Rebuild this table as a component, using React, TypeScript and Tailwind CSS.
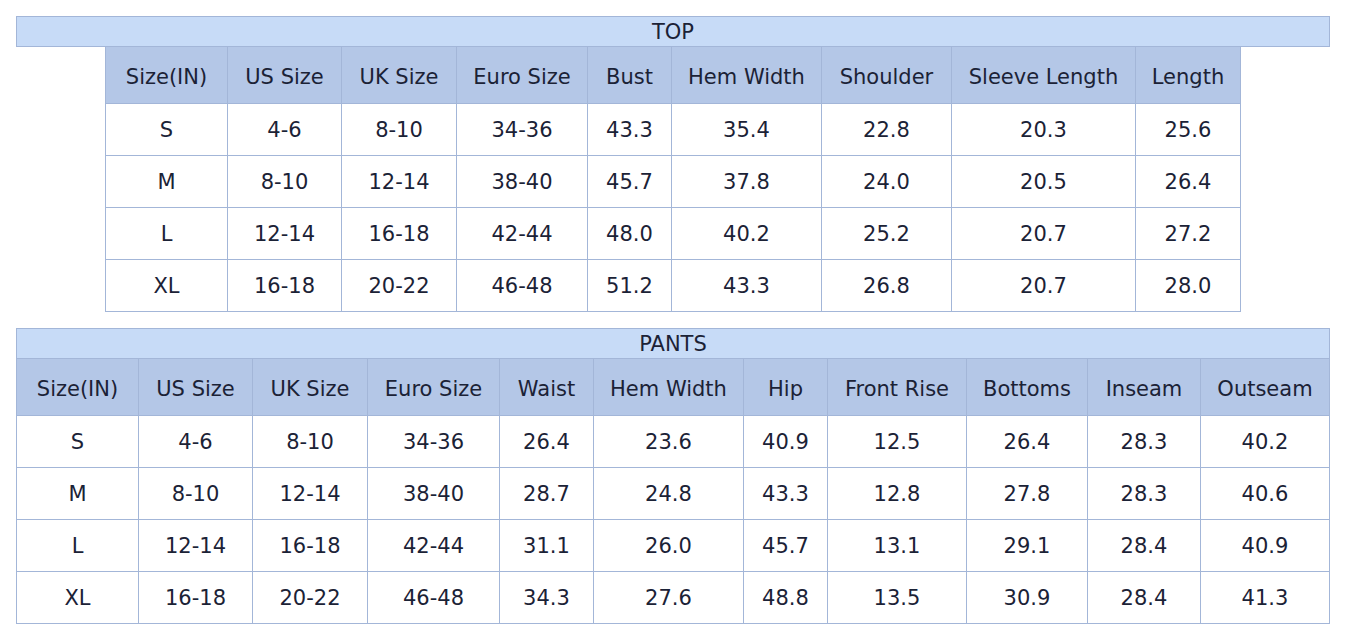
const TOP_HEAD = ["Size(IN)", "US Size", "UK Size", "Euro Size", "Bust", "Hem Width", "Shoulder", "Sleeve Length", "Length"];
const TOP_ROWS = [
  ["S", "4-6", "8-10", "34-36", "43.3", "35.4", "22.8", "20.3", "25.6"],
  ["M", "8-10", "12-14", "38-40", "45.7", "37.8", "24.0", "20.5", "26.4"],
  ["L", "12-14", "16-18", "42-44", "48.0", "40.2", "25.2", "20.7", "27.2"],
  ["XL", "16-18", "20-22", "46-48", "51.2", "43.3", "26.8", "20.7", "28.0"],
];

const PANTS_HEAD = ["Size(IN)", "US Size", "UK Size", "Euro Size", "Waist", "Hem Width", "Hip", "Front Rise", "Bottoms", "Inseam", "Outseam"];
const PANTS_ROWS = [
  ["S", "4-6", "8-10", "34-36", "26.4", "23.6", "40.9", "12.5", "26.4", "28.3", "40.2"],
  ["M", "8-10", "12-14", "38-40", "28.7", "24.8", "43.3", "12.8", "27.8", "28.3", "40.6"],
  ["L", "12-14", "16-18", "42-44", "31.1", "26.0", "45.7", "13.1", "29.1", "28.4", "40.9"],
  ["XL", "16-18", "20-22", "46-48", "34.3", "27.6", "48.8", "13.5", "30.9", "28.4", "41.3"],
];

function SizeTable({ head, rows, cols, width }: {
  head: string[];
  rows: string[][];
  cols: string;
  width: string;
}) {
  return (
    <div className={`${width} mx-auto border-l border-[#a3b6d8]`}>
      <div className={`grid ${cols} bg-[#b4c7e7]`}>
        {head.map((h) => (
          <div key={h} className="h-[57px] flex items-center justify-center border-r border-b border-[#a3b6d8] pt-1">
            {h}
          </div>
        ))}
      </div>
      {rows.map((row, r) => (
        <div key={r} className={`grid ${cols} bg-white`}>
          {row.map((c, i) => (
            <div key={i} className="h-[52px] flex items-center justify-center border-r border-b border-[#a3b6d8] pt-0.5">
              {c}
            </div>
          ))}
        </div>
      ))}
    </div>
  );
}

function TitleBar({ label }: { label: string }) {
  return (
    <div className="h-[31px] flex items-center justify-center bg-[#c7dbf7] border border-[#a3b6d8] pt-0.5">
      {label}
    </div>
  );
}

export default function App() {
  return (
    <div className="min-h-screen bg-white pt-4 px-4 text-[21px] leading-none text-[#1b2236] font-['DejaVu_Sans',Verdana,sans-serif]">
      <div className="w-[1314px]">
        <TitleBar label="TOP" />
        <SizeTable
          head={TOP_HEAD}
          rows={TOP_ROWS}
          width="w-[1136px]"
          cols="grid-cols-[122px_114px_115px_131px_84px_150px_130px_184px_105px]"
        />
        <div className="mt-4">
          <TitleBar label="PANTS" />
        </div>
        <SizeTable
          head={PANTS_HEAD}
          rows={PANTS_ROWS}
          width="w-[1314px]"
          cols="grid-cols-[122px_114px_115px_132px_94px_150px_84px_139px_121px_113px_129px]"
        />
      </div>
    </div>
  );
}
